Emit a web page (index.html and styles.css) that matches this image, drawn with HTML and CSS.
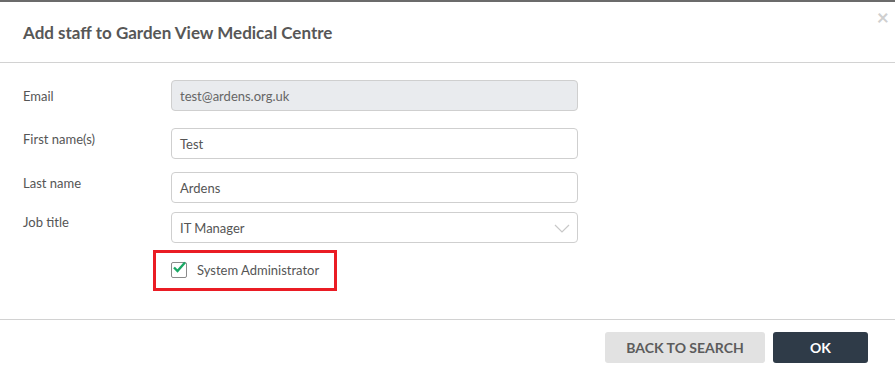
FILE: index.html
```html
<!DOCTYPE html>
<html lang="en">
<head>
<meta charset="UTF-8" />
<title>Add staff</title>
<link rel="stylesheet" href="styles.css">
</head>
<body>
<div class="topbar"></div>

<div class="modal">
  <div class="modal-header">
    <h3>Add staff to Garden View Medical Centre</h3>
    <span class="close">&times;</span>
  </div>

  <div class="modal-body">
    <div class="row row-email">
      <label>Email</label>
      <div class="field disabled">test@ardens.org.uk</div>
    </div>
    <div class="row row-first">
      <label>First name(s)</label>
      <div class="field">Test</div>
    </div>
    <div class="row row-last">
      <label>Last name</label>
      <div class="field">Ardens</div>
    </div>
    <div class="row row-job">
      <label>Job title</label>
      <div class="field select">
        IT Manager
        <svg class="caret" viewBox="0 0 16 10" width="16" height="10"><path d="M1 1 L8 8 L15 1" fill="none" stroke="#c8c8c8" stroke-width="1.2"/></svg>
      </div>
    </div>
    <div class="check-row">
      <div class="highlight">
        <span class="checkbox">
          <svg viewBox="0 0 16 16" width="16" height="16"><path d="M3 7.5 L6.5 11 L14 2.5" fill="none" stroke="#1aa865" stroke-width="2.4"/></svg>
        </span>
        System Administrator
      </div>
    </div>
  </div>

  <div class="modal-footer">
    <button class="btn btn-light">BACK TO SEARCH</button>
    <button class="btn btn-dark">OK</button>
  </div>
</div>
</body>
</html>
```

FILE: styles.css
```css
body {
  margin: 0;
  font-family: 'Lato', sans-serif;
  color: #555;
  background: #fff;
}

.topbar {
  height: 2px;
  background: #6b6b6b;
}

.modal {
  background: #fff;
}

.modal-header {
  position: relative;
  height: 60px;
  border-bottom: 1px solid #d2d2d2;
  display: flex;
  align-items: center;
  padding: 0 23px;
}
.modal-header h3 {
  margin: 0;
  font-size: 17px;
  font-weight: 700;
  color: #575757;
}
.close {
  position: absolute;
  top: 2px;
  right: 6px;
  font-size: 21px;
  font-weight: 700;
  color: #cfcfcf;
}

.modal-body {
  padding: 17px 0 0 23px;
  height: 256px;
  box-sizing: border-box;
}

.row {
  display: flex;
  align-items: flex-start;
}
.row label {
  width: 148px;
  font-size: 13px;
  color: #555;
}
.row-email label { padding-top: 8px; }
.row-first { margin-top: 17px; }
.row-first label { padding-top: 3px; }
.row-last { margin-top: 13px; }
.row-last label { padding-top: 3px; }
.row-job { margin-top: 9px; }
.row-job label { padding-top: 2px; }

.field {
  position: relative;
  width: 407px;
  height: 31px;
  box-sizing: border-box;
  border: 1px solid #cfcfcf;
  border-radius: 4px;
  padding: 0 8px;
  display: flex;
  align-items: center;
  font-size: 13px;
  color: #555;
}
.field.disabled {
  background: #e9ebee;
  color: #666;
}
.caret {
  position: absolute;
  right: 7px;
  top: 11px;
}

.check-row {
  margin: 7px 0 0 130px;
}
.highlight {
  display: inline-flex;
  align-items: center;
  gap: 10px;
  width: 184px;
  height: 41px;
  box-sizing: border-box;
  border: 3px solid #ea1c24;
  padding: 0 0 2px 15px;
  font-size: 13px;
  color: #555;
}
.checkbox {
  display: inline-block;
  width: 16px;
  height: 16px;
  box-sizing: border-box;
  border: 1.5px solid #8a8a8a;
  border-radius: 2px;
  position: relative;
}
.checkbox svg {
  position: absolute;
  left: -1px;
  top: -3px;
}

.modal-footer {
  border-top: 1px solid #d2d2d2;
  display: flex;
  justify-content: flex-end;
  gap: 8px;
  padding: 12px 27px 0 0;
}

.btn {
  height: 31px;
  border: none;
  border-radius: 3px;
  font-family: 'Lato', sans-serif;
  font-size: 14px;
  font-weight: 700;
  cursor: pointer;
}
.btn-light {
  width: 160px;
  background: #e2e2e2;
  color: #5c5c5c;
}
.btn-dark {
  width: 95px;
  background: #2f3b48;
  color: #fff;
}
```
